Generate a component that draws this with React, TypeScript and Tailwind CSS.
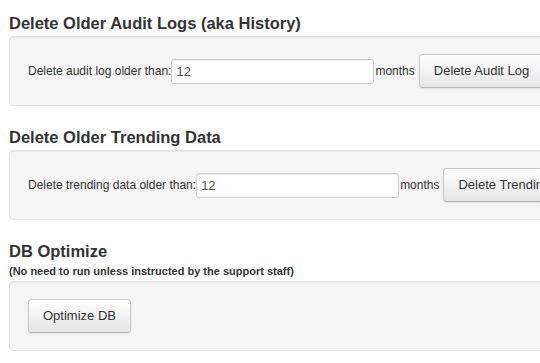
import type { ReactNode } from "react";

function Well({ children }: { children: ReactNode }) {
  return (
    <div className="flex h-[70px] w-[640px] items-center rounded-[4px] border border-[#e3e3e3] bg-[#f5f5f5] pl-[18px] shadow-[inset_0_1px_1px_rgba(0,0,0,0.05)]">
      {children}
    </div>
  );
}

function Btn({ label, className = "" }: { label: string; className?: string }) {
  return (
    <button
      type="button"
      className={`h-[34px] shrink-0 whitespace-nowrap rounded-[4px] border border-[#c8c8c8] border-b-[#b3b3b3] bg-gradient-to-b from-white to-[#e6e6e6] px-[14px] text-[13px] text-[#333] shadow-[0_1px_2px_rgba(0,0,0,0.08)] ${className}`}
    >
      {label}
    </button>
  );
}

function AgeRow({ label, action }: { label: string; action: string }) {
  return (
    <>
      <span className="whitespace-nowrap text-[12px] text-[#333]">{label}</span>
      <input
        type="text"
        defaultValue="12"
        className="h-[25px] w-[203px] shrink-0 rounded-[3px] border border-[#cccccc] bg-white px-[4px] text-[13px] text-[#555] shadow-[inset_0_1px_1px_rgba(0,0,0,0.075)] outline-none"
      />
      <span className="ml-[1px] text-[12px] text-[#333]">months</span>
      <Btn label={action} className="ml-[4px]" />
    </>
  );
}

export default function App() {
  return (
    <div className="h-[363px] w-[540px] overflow-hidden bg-white pl-[9px] pt-[13px] font-['Liberation_Sans',Arial,sans-serif] text-[#333]">
      <section>
        <h2 className="mb-[3px] whitespace-nowrap text-[16.5px] font-bold leading-[20px]">
          Delete Older Audit Logs (aka History)
        </h2>
        <Well>
          <AgeRow label="Delete audit log older than:" action="Delete Audit Log" />
        </Well>
      </section>

      <section className="mt-[21px]">
        <h2 className="mb-[3px] whitespace-nowrap text-[16.5px] font-bold leading-[20px]">
          Delete Older Trending Data
        </h2>
        <Well>
          <AgeRow label="Delete trending data older than:" action="Delete Trending Data" />
        </Well>
      </section>

      <section className="mt-[21px]">
        <h2 className="whitespace-nowrap text-[16.5px] font-bold leading-[20px]">DB Optimize</h2>
        <p className="mb-[3px] mt-[3px] whitespace-nowrap text-[11px] font-bold leading-[14px]">
          (No need to run unless instructed by the support staff)
        </p>
        <Well>
          <Btn label="Optimize DB" />
        </Well>
      </section>
    </div>
  );
}
